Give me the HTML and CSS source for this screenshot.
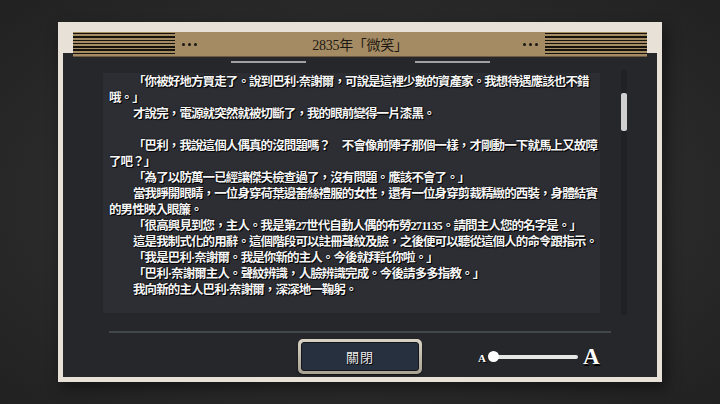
FILE: index.html
```html
<!DOCTYPE html>
<html lang="zh-TW">
<head>
    <meta charset="UTF-8">
    <meta name="viewport" content="width=device-width, initial-scale=1.0">
    <title>2835年「微笑」</title>
    <link rel="stylesheet" href="styles.css">
</head>
<body>
    <div class="frame">
        <div class="panel">
            <div class="title-bar">
                <div class="stripes"></div>
                <span class="dots"><i></i><i></i><i></i></span>
                <h1 class="title">2835年「微笑」</h1>
                <span class="dots"><i></i><i></i><i></i></span>
                <div class="stripes"></div>
            </div>

            <div class="deco"><span></span><span></span></div>

            <div class="reader">
                <div class="story">
                    <p>「你被好地方買走了。說到巴利·奈謝爾，可說是這裡少數的資產家。我想待遇應該也不錯<br>哦。」</p>
                    <p>才說完，電源就突然就被切斷了，我的眼前變得一片漆黑。</p>
                    <p class="blank">&nbsp;</p>
                    <p>「巴利，我說這個人偶真的沒問題嗎？　不會像前陣子那個一樣，才剛動一下就馬上又故障<br>了吧？」</p>
                    <p>「為了以防萬一已經讓傑夫檢查過了，沒有問題。應該不會了。」</p>
                    <p>當我睜開眼睛，一位身穿荷葉邊蕾絲禮服的女性，還有一位身穿剪裁精緻的西裝，身體結實<br>的男性映入眼簾。</p>
                    <p>「很高興見到您，主人。我是第27世代自動人偶的布勞271135。請問主人您的名字是。」</p>
                    <p>這是我制式化的用辭。這個階段可以註冊聲紋及臉，之後便可以聽從這個人的命令跟指示。</p>
                    <p>「我是巴利·奈謝爾。我是你新的主人。今後就拜託你啦。」</p>
                    <p>「巴利·奈謝爾主人。聲紋辨識，人臉辨識完成。今後請多多指教。」</p>
                    <p>我向新的主人巴利·奈謝爾，深深地一鞠躬。</p>
                </div>
                <div class="scrollbar"><div class="thumb"></div></div>
            </div>

            <div class="separator"></div>

            <div class="actions">
                <div></div>
                <button class="close-btn"><span>關閉</span></button>
                <div class="font-size">
                    <span class="a-small">A</span>
                    <div class="slider"><div class="knob"></div></div>
                    <span class="a-big">A</span>
                </div>
            </div>
        </div>
    </div>
</body>
</html>
```

FILE: styles.css
```css
:root {
    --cream: #e7e1d8;
    --tan: #a48b63;
    --panel: #26272b;
    --box: #2d2e33;
}

* {
    margin: 0;
    padding: 0;
    box-sizing: border-box;
}

body {
    width: 720px;
    height: 404px;
    overflow: hidden;
    background: radial-gradient(ellipse at 50% 50%, #313131 0%, #2a2a2a 60%, #212121 100%);
    font-family: "Liberation Serif", "Noto Sans CJK TC", serif;
    padding-top: 22px;
}

.frame {
    width: 604px;
    height: 360px;
    margin: 0 auto;
    background: var(--cream);
    padding: 31px 5px 5px;
    box-shadow: 4px 6px 14px rgba(0, 0, 0, 0.45);
}

.panel {
    height: 324px;
    background: var(--panel);
    display: flex;
    flex-direction: column;
}

/* header strip */
.title-bar {
    height: 25px;
    margin: -21px 10px 0;
    background: var(--tan);
    display: flex;
    align-items: center;
    border-bottom: 1px solid #6b5b42;
}

.stripes {
    width: 102px;
    height: 23px;
    align-self: flex-start;
    margin-top: 1px;
    background: repeating-linear-gradient(to bottom, #15120e 0, #15120e 1.4px, var(--tan) 1.4px, var(--tan) 3.3px);
}

.dots {
    display: flex;
    gap: 3px;
    margin: 0 7px;
}

.dots i {
    width: 3px;
    height: 3px;
    border-radius: 50%;
    background: #1a1610;
}

.title {
    flex: 1;
    text-align: center;
    font-size: 14px;
    font-weight: normal;
    color: #1c1812;
    letter-spacing: -0.3px;
}

.deco {
    display: flex;
    justify-content: center;
    gap: 109px;
    margin-top: 4px;
}

.deco span {
    width: 75px;
    height: 2px;
    background: #9fa1a4;
}

/* story text */
.reader {
    display: flex;
    gap: 21px;
    margin-top: 10px;
    padding-left: 40px;
}

.story {
    width: 497px;
    height: 240px;
    background: var(--box);
    padding: 1px 0 0 6px;
    font-family: "Liberation Serif", "Noto Sans CJK TC", serif;
    font-size: 12.5px;
    font-weight: bold;
    line-height: 16px;
    letter-spacing: -0.9px;
    color: #f5f5f5;
    text-shadow: 1px 1px 0 #000, 0 0 2px #000;
    white-space: nowrap;
}

.story p {
    text-indent: 24px;
}

.scrollbar {
    width: 6px;
    height: 245px;
    margin-top: -3px;
    background: #202124;
    padding-top: 23px;
}

.thumb {
    width: 6px;
    height: 38px;
    border-radius: 2px;
    background: #cfcfcf;
}

.separator {
    height: 2px;
    margin: 16px 46px 0;
    background: #42474c;
}

/* bottom row */
.actions {
    display: grid;
    grid-template-columns: 1fr auto 1fr;
    align-items: center;
    margin-top: 6px;
}

.close-btn {
    width: 124px;
    height: 35px;
    padding: 3px;
    border: none;
    border-radius: 5px;
    background: linear-gradient(to bottom, #d8d3c6, #a8a291);
    box-shadow: 0 1px 2px rgba(0, 0, 0, 0.6);
}

.close-btn span {
    display: flex;
    align-items: center;
    justify-content: center;
    height: 100%;
    border: 1px solid #14161b;
    border-radius: 3px;
    background: #27303f;
    color: #ececec;
    font-family: "Liberation Serif", "Noto Sans CJK TC", serif;
    font-size: 13px;
    letter-spacing: 1px;
    text-shadow: 1px 1px 0 #000;
}

.font-size {
    display: flex;
    align-items: center;
    padding-left: 56px;
    color: #fff;
    font-weight: bold;
    text-shadow: 1px 1px 0 #000;
}

.a-small {
    font-size: 11px;
    margin-top: 2px;
}

.slider {
    position: relative;
    width: 88px;
    height: 4px;
    margin-left: 4px;
    border-radius: 2px;
    background: #e6e6e6;
}

.knob {
    position: absolute;
    left: -2px;
    top: -4px;
    width: 11px;
    height: 11px;
    border-radius: 50%;
    background: #fff;
}

.a-big {
    font-size: 23px;
    margin-left: 5px;
    text-shadow: 1px 2px 0 #000;
}
```
